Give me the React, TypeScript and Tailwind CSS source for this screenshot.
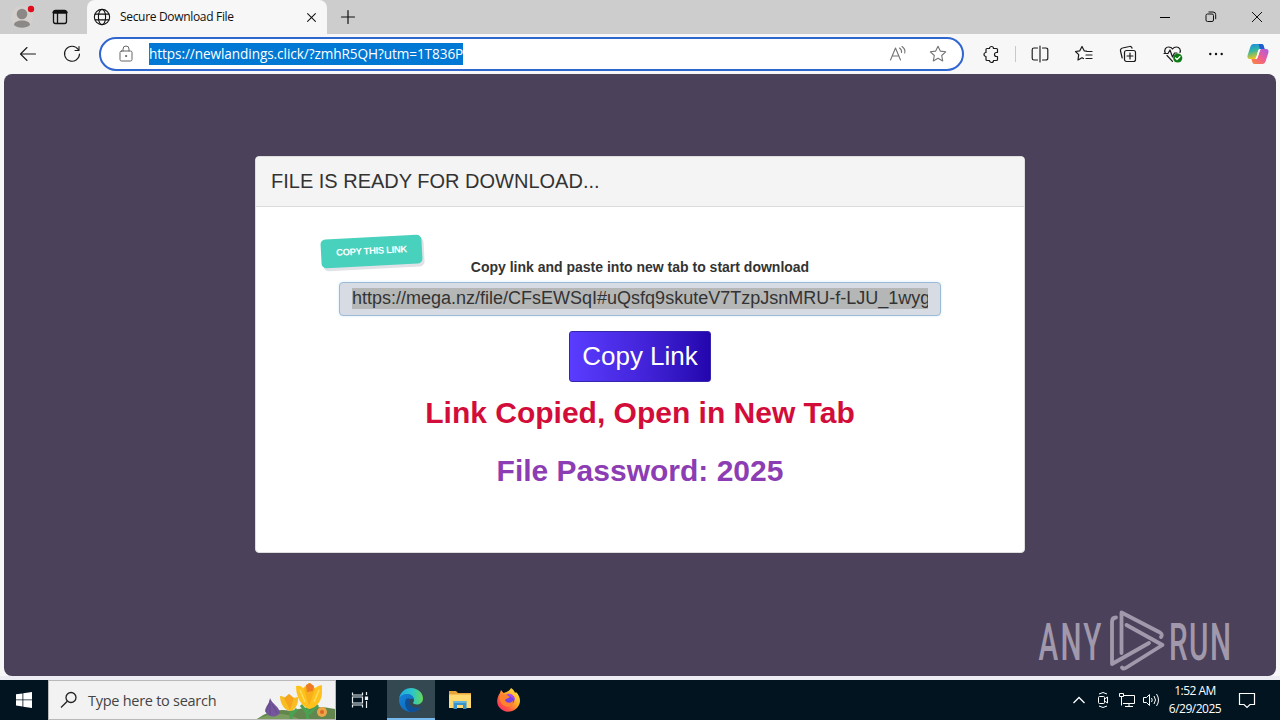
import type { ReactNode } from "react";

function Icon({ size = 20, w = 1, className = "", children }: { size?: number; w?: number; className?: string; children: ReactNode }) {
  return (
    <svg width={size} height={size} viewBox="0 0 20 20" fill="none" stroke="currentColor" strokeWidth={w} strokeLinecap="round" strokeLinejoin="round" className={className}>
      {children}
    </svg>
  );
}

const STAR = "M10 2.2l2.3 4.9 5.4.7-4 3.7 1 5.4-4.7-2.6-4.7 2.6 1-5.4-4-3.7 5.4-.7z";

function TabBar() {
  return (
    <header className="flex h-[34px] shrink-0 bg-[#cdcdcd] text-[#111]">
      <div className="flex w-[44px] items-center justify-center">
        <svg width="28" height="30" viewBox="0 0 28 30">
          <circle cx="14" cy="15" r="11" fill="#d3d0ce" />
          <circle cx="14" cy="12" r="5.3" fill="#8b8886" />
          <path d="M6 23c0-3 3.500-4.600 8-4.600s8 1.600 8 4.600c-2 1.800-4.600 2.800-8 2.800s-6-1-8-2.800z" fill="#8b8886" />
          <circle cx="23" cy="7" r="3.200" fill="#e00b1c" />
        </svg>
      </div>
      <div className="flex w-[43px] items-center pl-[6px]">
        <Icon w={1.3}>
          <rect x="3.500" y="3.500" width="13" height="13" rx="2" />
          <path d="M4 5.200h12" strokeWidth="3" />
          <path d="M7.500 6v10" />
        </Icon>
      </div>
      <div className="flex w-[240px] items-center rounded-t-lg bg-[#f7f7f7] pl-[6px]">
        <Icon size={18} w={1.2}>
          <circle cx="10" cy="10" r="8.500" />
          <ellipse cx="10" cy="10" rx="4" ry="8.500" />
          <path d="M2.500 6.800h15M2.500 13.200h15" />
        </Icon>
        <span className="ml-[9px] w-[185px] whitespace-nowrap font-['Open_Sans',sans-serif] text-[12px] leading-4 tracking-[-0.32px]">Secure Download File</span>
        <Icon size={13} w={1.600}><path d="M4 4l12 12M16 4L4 16" /></Icon>
      </div>
      <div className="flex w-[42px] items-center justify-center">
        <Icon size={20} w={1.200}><path d="M10 3.500v13M3.500 10h13" /></Icon>
      </div>
      <div className="ml-auto flex">
        <div className="flex w-[46px] items-center justify-center"><span className="h-px w-[10px] bg-black" /></div>
        <div className="flex w-[46px] items-center justify-center">
          <svg width="12" height="12" viewBox="0 0 12 12" fill="none" stroke="#111"><rect x="1" y="3" width="7.500" height="7.500" rx="1.500" /><path d="M3.500 1h4.500a2.700 2.700 0 0 1 2.700 2.700v4.500" /></svg>
        </div>
        <div className="flex w-[46px] items-center justify-center">
          <svg width="12" height="12" viewBox="0 0 12 12" fill="none" stroke="#111"><path d="M1 1l10 10M11 1L1 11" /></svg>
        </div>
      </div>
    </header>
  );
}

function Toolbar() {
  return (
    <nav className="flex h-[40px] shrink-0 items-center bg-[#f7f7f7] pl-[6px] text-[#1b1b1b]">
      <div className="flex w-[44px] justify-center"><Icon w={1.100}><path d="M17.500 10H2.500M9 3.500L2.500 10L9 16.500" /></Icon></div>
      <div className="flex w-[44px] justify-center"><Icon w={1.100}><path d="M16.200 5.500A7.500 7.500 0 1 0 17.500 10M17 2.500v4h-4" /></Icon></div>
      <div className="ml-[5px] flex h-[34px] w-[865px] items-center rounded-full border-2 border-[#2f66d0] bg-white">
        <div className="ml-[15px] w-[33px] text-[#666]">
          <Icon w={1}><rect x="4" y="7" width="12" height="10" rx="1.500" /><path d="M7 7V5a3 3 0 0 1 6 0v2" /><circle cx="10" cy="12" r=".6" fill="currentColor" /></Icon>
        </div>
        <span className="h-[22px] whitespace-nowrap bg-[#0078d4] font-['Open_Sans',sans-serif] text-[13.600px] leading-[22px] tracking-[-0.08px] text-white">https://newlandings.click/?zmhR5QH?utm=1T836P</span>
        <div className="ml-auto mr-[14px] flex gap-5 text-[#747474]">
          <Icon w={1.100}><path d="M2.500 16L7.500 4l5 12M4.200 12h6.600M11.500 4c1.600 1 2.300 2.700 2 4.500M14 2.500c2.300 1.600 3.300 4 2.800 6.500" /></Icon>
          <Icon w={1.100}><path d={STAR} /></Icon>
        </div>
      </div>
      <div className="flex flex-1 items-center">
        <div className="flex w-[51px] justify-center pl-[4px]">
          <Icon w={1.200}><path d="M7.500 4.500a2 2 0 0 1 4 0h3a1 1 0 0 1 1 1v3h-1a2 2 0 0 0 0 4h1v3a1 1 0 0 1-1 1h-3a2 2 0 0 1-4 0h-2.500a1 1 0 0 1-1-1v-3a2 2 0 0 1 0-4v-3a1 1 0 0 1 1-1z" /></Icon>
        </div>
        <span className="h-4 w-px bg-[#c9c9c9]" />
        <div className="flex w-[46px] justify-center pl-[2px]">
          <Icon w={1.150}><path d="M10 2v16M7.500 4H4a1.800 1.800 0 0 0-1.800 1.800v8.400A1.800 1.800 0 0 0 4 16h3.500M12.500 4H16a1.800 1.800 0 0 1 1.800 1.800v8.400A1.800 1.800 0 0 1 16 16h-3.500" /></Icon>
        </div>
        <div className="flex w-[44px] justify-center"><Icon w={1.200}><path d="M12.500 7.200l-2.300-.4L8 2.500 5.800 6.800 1.500 7.500l3.200 3.200-.7 5.300 4-2.300 1.500.8M12 11h6M12 14.500h6M13 7.500h5" /></Icon></div>
        <div className="flex w-[44px] justify-center"><Icon w={1.200}><rect x="6.500" y="6.500" width="11" height="11" rx="2" /><path d="M12 9v6M9 12h6M4.200 14L2.500 7a2.500 2.500 0 0 1 2-3l7-1.500a2 2 0 0 1 2.500 1.600" /></Icon></div>
        <div className="flex w-[45px] justify-center">
          <Icon w={1.200}><path d="M2.200 9C.8 5.500 3 3 5.500 3 7.500 3 9 4 9.500 5c.8-1.200 2.200-2 4-2C16.500 3 18 6 17 8.500M4 11.500l5.500 5.800M1 9.500h4l2-3.500 2.500 7 2-4h2.500" /><circle cx="14.700" cy="14" r="4.600" fill="#0f7b16" stroke="none" /><path d="M12.500 14l1.500 1.500 3-3" stroke="white" /></Icon>
        </div>
        <div className="flex w-[42px] justify-center">
          <svg width="16" height="4" viewBox="0 0 16 4" fill="#111"><circle cx="2.300" cy="2" r="1.200" /><circle cx="8" cy="2" r="1.200" /><circle cx="13.700" cy="2" r="1.200" /></svg>
        </div>
        <div className="flex w-[42px] justify-center">
          <svg width="22" height="22" viewBox="0 0 22 22">
            <defs>
              <linearGradient id="ca" x1="0" y1="0" x2="0.300" y2="1"><stop stopColor="#1589ee" /><stop offset=".5" stopColor="#35b7a0" /><stop offset="1" stopColor="#f0c51c" /></linearGradient>
              <linearGradient id="cb" x1="1" y1="0" x2="0" y2="1"><stop stopColor="#a65be8" /><stop offset=".5" stopColor="#ee5d91" /><stop offset="1" stopColor="#fa8a34" /></linearGradient>
            </defs>
            <path d="M6.500 1h8c1.500 0 2 1 2.500 3l.6 2H14c-2 0-2.600 1-3.200 3l-1.500 5c-.6 1.700-1.300 2-3 2H3C.6 16 0 14 .7 12L3.300 4C4 2 5 1 6.500 1z" fill="url(#ca)" />
            <path d="M15.500 21h-8C6 21 5.500 20 5 18l-.6-2H8c2 0 2.600-1 3.200-3l1.500-5c.6-1.700 1.300-2 3-2H19c2.400 0 3 2 2.300 4l-2.600 8c-.7 2-1.700 3-3.200 3z" fill="url(#cb)" />
            <path d="M11.500 1h3c1.500 0 2 1 2.500 3l.6 2H14l-1 .3z" fill="#215bd2" />
            <path d="M10.800 9l1.200-3h1.600l-.9 2-2 6-1 2H8.200c1-.5 1-1 1.300-2z" fill="#fff" />
          </svg>
        </div>
      </div>
    </nav>
  );
}

function Watermark() {
  return (
    <svg width="204" height="66" viewBox="1036 608 204 66" className="absolute bottom-[2px] right-[36px]" fill="none" stroke="#a199ab" strokeWidth="3.800" strokeLinejoin="round" strokeLinecap="round">
      <g fill="#a199ab" stroke="none" fontFamily="Roboto, sans-serif" fontSize="52" fontWeight="500">
        <text transform="translate(1038.500 659.500) scale(.57 1)" letterSpacing="4">ANY</text>
        <text transform="translate(1169 659.500) scale(.57 1)" letterSpacing="2.500">RUN</text>
      </g>
      <path d="M1116 617.500q-4 0-4 4.500v42l37-21" />
      <path d="M1121.500 653v-40.500l38.500 20q3 2 1 4.500" />
      <path d="M1126.500 625l36 20-36 22.500q-3 2-4.500 0" />
    </svg>
  );
}

function DownloadCard() {
  return (
    <section className="h-[397px] w-[770px] overflow-hidden rounded-[4px] border border-[#ddd] bg-white font-['Liberation_Sans',Arial,sans-serif] text-[#333]">
      <h1 className="h-[50px] border-b border-[#ddd] bg-[#f4f4f4] pl-[15px] text-[20px] leading-[48px]">FILE IS READY FOR DOWNLOAD...</h1>
      <div className="relative flex flex-col items-center pt-[52px]">
        <div className="absolute left-[65px] top-[30px] flex h-[29px] w-[101px] rotate-[-3deg] items-center justify-center rounded-[5px] bg-[#48d1bd] text-[9.500px] text-white shadow-[2px_3px_0_#e0e2e7]">
          <span className="whitespace-nowrap font-bold tracking-[-0.34px]">COPY THIS LINK</span>
        </div>
        <p className="h-[23px] whitespace-nowrap text-[14px] font-bold leading-[17px]">Copy link and paste into new tab to start download</p>
        <div className="h-[34px] w-[602px] rounded-[4px] border border-[#9dbbd7] bg-[#d7dce4] px-[12px] pt-[5px] shadow-[0_0_3px_#d3e8fa]">
          <span className="block h-[21px] w-[576px] overflow-hidden whitespace-nowrap bg-[#b5b7b7] text-[18px] leading-[20px]">https://mega.nz/file/CFsEWSqI#uQsfq9skuteV7TzpJsnMRU-f-LJU_1wyg</span>
        </div>
        <button className="mt-[15px] h-[51px] w-[142px] rounded-[3px] border border-[#3426ad] bg-linear-to-r from-[#593cff] via-[#4525dc] to-[#2405ad] pb-[1px] text-[26px] leading-[48px] text-white">Copy Link</button>
        <h2 className="mt-[13px] h-[36px] whitespace-nowrap text-[30px] font-bold leading-[36px] text-[#d20d39]">Link Copied, Open in New Tab</h2>
        <h2 className="mt-[22px] h-[36px] whitespace-nowrap text-[30px] font-bold leading-[36px] text-[#8d3db3]">File Password: 2025</h2>
      </div>
    </section>
  );
}

function Flowers() {
  return (
    <svg width="78" height="38" viewBox="258 681 78 38">
      <path d="M258 719q16-12 34-8 22-7 44-2v10z" fill="#62864e" />
      <path d="M258 719q22-10 42 0z" fill="#7b9c5f" />
      <path d="M266 711c1-6 4-6 5-13 2 6 9 8 10 15-3 5-12 5-15-2z" fill="#75569d" />
      <path d="M271 700v15M273 704l5 9M270 704l-3 8" stroke="#5b437f" strokeWidth=".7" fill="none" />
      <path d="M292 719v-13M309 719q-2-8 1-15M310 714l9-9M309 714l-7-9M292 716l6-7" stroke="#4ba052" strokeWidth="3" fill="none" />
      <path d="M281 696q4 0 6 3l3-5 4 4 5-1c1 8-4 14-8 14-6-1-10-8-10-15z" fill="#f7bd22" />
      <path d="M285 698l6 12 4-12-5-4z" fill="#f6a31e" />
      <path d="M297 686q5-1 7 2l6-5 6 5q4-3 7-3v9c-1 9-7 14-13 15-8-3-13-12-13-23z" fill="#ffc21d" />
      <path d="M305 689l5 17 6-17-6-6z" fill="#f8af1b" />
      <path d="M307 685l4-2 4 3-1 5-6 1z" fill="#ed7a24" />
      <path d="M301 690l5 12M320 690l-5 12" stroke="#ffdc5c" strokeWidth="1.500" />
      <circle cx="323" cy="712" r="5" fill="#eca64a" /><circle cx="323" cy="712" r="2" fill="#dc6625" />
    </svg>
  );
}

function Taskbar() {
  return (
    <footer className="flex h-[40px] shrink-0 bg-[#011420] text-white">
      <div className="flex w-[48px] items-center justify-center">
        <svg width="16" height="16" viewBox="0 0 16 16" fill="white"><path d="M0 2.300L6.500 1.400v6.100H0zM7.300 1.300L16 0v7.500H7.300zM0 8.300h6.500v6.200L0 13.600zM7.300 8.300H16V16l-8.700-1.200z" /></svg>
      </div>
      <div className="flex h-[40px] w-[288px] items-center border border-[#b9b9b9] bg-[#f2f2f2]">
        <svg width="18" height="18" viewBox="0 0 18 18" fill="none" stroke="#222" strokeWidth="1.300" className="ml-[11px]"><circle cx="11" cy="6.500" r="5" /><path d="M7.300 10.300L1 16.500" /></svg>
        <span className="ml-[10px] whitespace-nowrap pt-[2px] font-['Open_Sans',sans-serif] text-[14.500px] tracking-[-0.27px] text-[#444]">Type here to search</span>
        <div className="ml-auto"><Flowers /></div>
      </div>
      <div className="flex w-[51px] items-center justify-center pr-[4px]">
        <svg width="18" height="18" viewBox="0 0 18 18" fill="none" stroke="#e8edf0" strokeWidth="1.200"><path d="M1.500 1.500v2.500h10V1.500M1.500 16.500V14h10v2.500M1.500 6h10v6h-10zM15.500 1v3M15.500 10v7" /><path d="M14.500 6h2v2.500h-2z" fill="#fff" /></svg>
      </div>
      <div className="flex w-[48px] items-center justify-center border-b-2 border-[#76b9ed] bg-[#344852] pt-[2px]">
        <svg width="24" height="24" viewBox="0 0 24 24">
          <defs>
            <linearGradient id="e1"><stop stopColor="#1ca9e8" /><stop offset=".55" stopColor="#2cc5c8" /><stop offset="1" stopColor="#66d957" /></linearGradient>
            <linearGradient id="e2" x1="0" y1="0" x2="1" y2="1"><stop stopColor="#1683da" /><stop offset="1" stopColor="#0863ad" /></linearGradient>
          </defs>
          <path d="M.1 11C.8 4.500 6 0 12.200 0 19 0 24 5.200 24 10.500c0 3.500-2.700 6-6 6-2.300 0-4-.8-4-1.500 0-.6 1-1 1-3 0-3-3-5.500-7-5.500C3.500 6.500.8 9 .1 11z" fill="url(#e1)" />
          <path d="M.1 11C1.300 7.500 4.300 6 7.800 6c4 0 7 2 7.200 5.500-3-2-6 .5-6 4 0 4 4 7 9 5.500 1.500-.5 2.500-1 3.500-1.500C19.500 22.300 16 24 12 24 5 24-.7 18 .1 11z" fill="url(#e2)" />
          <path d="M8.500 10C5 12 5 19 10.500 23.800 16 24.500 20 22 22.300 18.500c-4 2.200-9 1.500-11-1.500-1.500-2.200-1-4.500.2-5.700-1-.9-2-.9-3-.3z" fill="#104f94" />
        </svg>
      </div>
      <div className="flex w-[49px] items-center justify-center">
        <svg width="22" height="20" viewBox="0 0 22 20"><path d="M0 1h7l2 2h13v15H0z" fill="#e8a33a" /><path d="M0 4.500h22V18H0z" fill="#ffda70" /><path d="M4.500 11h13v8h-3.500v-4h-6v4H4.500z" fill="#3893cc" /><path d="M5 11h12v2H5z" fill="#65b4dc" /></svg>
      </div>
      <div className="flex w-[50px] items-center justify-center">
        <svg width="24" height="24" viewBox="0 0 24 24">
          <defs><linearGradient id="ff" x1="1" y1="0" x2="0" y2="1"><stop stopColor="#fff44f" /><stop offset=".4" stopColor="#ffad28" /><stop offset=".72" stopColor="#ff5145" /><stop offset="1" stopColor="#e9237d" /></linearGradient></defs>
          <path d="M3 5l1-3 2.500 3 3-1C11 3 13 2.500 14 0c2 1 3.500 3 4 5l1-1c4 4 5 9 3 13-4 8-15 9-20 2C-1 15 0 9 3 5z" fill="url(#ff)" />
          <circle cx="12" cy="11.500" r="5.500" fill="#7543e5" />
          <path d="M3 8c2-2 4-2 7-1l3 2c-2 2-4 1-5 3 1 3 5 4 8 1 1 4-4 7-8 5-4-1-6-6-5-10z" fill="#ff832e" /><path d="M10 6c4-1 8 2 8 6-1-2-4-3-6-4z" fill="#a94bea" />
        </svg>
      </div>
      <div className="ml-auto flex items-center">
        <div className="flex w-[24px] justify-center"><svg width="14" height="10" fill="none" stroke="white" strokeWidth="1.300"><path d="M1.500 8L7 2.500 12.500 8" /></svg></div>
        <div className="flex w-[24px] justify-center"><svg width="16" height="18" viewBox="0 0 16 18" fill="none" stroke="white"><rect x="3.500" y="5.500" width="6" height="7" rx="1" /><path d="M9.500 8l3-2v6l-3-2M4 3q4-3 8 0M4 15q4 3 8 0" /></svg></div>
        <div className="flex w-[24px] justify-center"><svg width="18" height="16" viewBox="0 0 18 16" fill="none" stroke="white"><path d="M5 3.500h11.500v8H5M11 11.500v3M7 14.500h8M1.500 1.500h4v3h-4zM3.500 4.500v9" /></svg></div>
        <div className="flex w-[24px] justify-center"><svg width="18" height="16" viewBox="0 0 18 16" fill="none" stroke="white"><path d="M1.500 5.500h3l3-3v11l-3-3h-3zM9.500 6q1.500 2 0 4M12 4q3 4 0 8M14.500 2q4 6 0 12" /></svg></div>
        <div className="flex w-[64px] flex-col items-center whitespace-nowrap font-['Open_Sans',sans-serif] text-[12px] leading-[18px] tracking-[-0.5px]"><span>1:52 AM</span><span>6/29/2025</span></div>
        <div className="flex w-[53px] pl-[11px]"><svg width="18" height="18" viewBox="0 0 18 18" fill="none" stroke="white" strokeWidth="1.200"><path d="M1.500 2.500h15v11H12L9 16.500 6 13.500H1.500z" /></svg></div>
      </div>
    </footer>
  );
}

export default function App() {
  return (
    <div className="flex h-[720px] w-[1280px] flex-col overflow-hidden bg-[#f7f7f7]">
      <TabBar />
      <Toolbar />
      <main className="relative mx-[4px] flex h-[602px] shrink-0 justify-center rounded-[8px] bg-[#4b415b] pt-[82px]">
        <DownloadCard />
        <Watermark />
      </main>
      <div className="h-[4px] shrink-0 bg-[#ececf2]" />
      <Taskbar />
    </div>
  );
}
